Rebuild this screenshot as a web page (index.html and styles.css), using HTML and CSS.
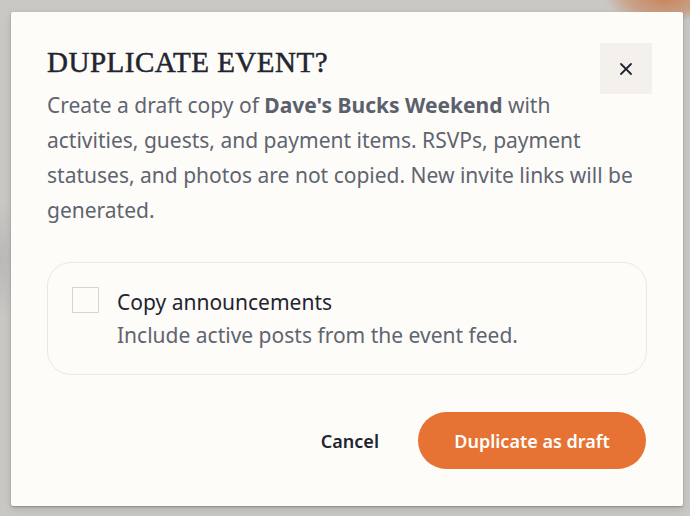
FILE: index.html
```html
<!DOCTYPE html>
<html lang="en">
<head>
    <meta charset="UTF-8">
    <meta name="viewport" content="width=device-width, initial-scale=1.0">
    <title>Duplicate Event</title>
    <link rel="stylesheet" href="styles.css">
</head>
<body>
    <div class="backdrop">
        <div class="modal" role="dialog" aria-labelledby="modalTitle">
            <button class="close-btn" aria-label="Close">
                <svg width="14" height="14" viewBox="0 0 14 14" fill="none" stroke="#1f2430" stroke-width="1.8" stroke-linecap="round">
                    <path d="M2 2 L12 12 M12 2 L2 12"/>
                </svg>
            </button>

            <h2 class="modal-title" id="modalTitle">Duplicate event?</h2>
            <p class="modal-text">
                Create a draft copy of <strong>Dave's Bucks Weekend</strong> with activities, guests, and payment items. RSVPs, payment statuses, and photos are not copied. New invite links will be generated.
            </p>

            <label class="option-card">
                <span class="checkbox"></span>
                <span class="option-body">
                    <span class="option-title">Copy announcements</span>
                    <span class="option-desc">Include active posts from the event feed.</span>
                </span>
            </label>

            <div class="modal-actions">
                <button class="cancel-btn">Cancel</button>
                <button class="primary-btn">Duplicate as draft</button>
            </div>
        </div>
    </div>
</body>
</html>
```

FILE: styles.css
```css
* {
    box-sizing: border-box;
}

body {
    margin: 0;
    font-family: "Noto Sans", "Open Sans", sans-serif;
}

.backdrop {
    width: 690px;
    height: 516px;
    overflow: hidden;
    padding: 12px 0 0 11px;
    background:
        radial-gradient(ellipse 60px 22px at 665px 0, #c8875e 0%, rgba(200, 135, 94, 0.6) 60%, rgba(200, 135, 94, 0) 100%),
        radial-gradient(ellipse 20px 60px at 0 260px, #b9b8b6, rgba(185, 184, 182, 0)),
        #c9c8c5;
}

.modal {
    position: relative;
    width: 672px;
    height: 494px;
    background-color: #fdfcf9;
    border-radius: 2px;
    box-shadow: 0 1px 2px rgba(0, 0, 0, 0.25), 0 3px 8px rgba(0, 0, 0, 0.12);
    padding: 32px 36px 37px;
    display: flex;
    flex-direction: column;
}

.close-btn {
    position: absolute;
    top: 31px;
    right: 31px;
    width: 52px;
    height: 51px;
    border: none;
    background-color: #f4f1ec;
    display: flex;
    align-items: center;
    justify-content: center;
    cursor: pointer;
    padding: 0;
}

.modal-title {
    margin: 0;
    font-family: "Liberation Serif", "DejaVu Serif", serif;
    font-size: 29px;
    font-weight: normal;
    text-transform: uppercase;
    letter-spacing: 0.5px;
    color: #22252e;
    line-height: 36px;
    -webkit-text-stroke: 0.5px #22252e;
}

.modal-text {
    margin: 8px 0 0;
    font-size: 21px;
    line-height: 35px;
    color: #5f6470;
    padding-right: 10px;
}

.modal-text strong {
    font-weight: 700;
    color: #5a606c;
}

.option-card {
    margin-top: 34px;
    border: 1px solid #ebe8e3;
    border-radius: 24px;
    padding: 24px 24px 21px;
    display: flex;
    gap: 18px;
    cursor: pointer;
}

.checkbox {
    width: 27px;
    height: 26px;
    border: 1px solid #d8d5d0;
    background-color: #fdfcf9;
    flex-shrink: 0;
}

.option-body {
    display: flex;
    flex-direction: column;
}

.option-title {
    font-size: 21px;
    line-height: 30px;
    color: #1f2430;
}

.option-desc {
    font-size: 21px;
    line-height: 36px;
    color: #5f6470;
}

.modal-actions {
    margin-top: auto;
    display: flex;
    justify-content: flex-end;
    align-items: center;
    gap: 19px;
}

.cancel-btn {
    border: none;
    background: none;
    font-family: inherit;
    font-size: 18px;
    font-weight: 600;
    color: #1f2430;
    padding: 0 20px;
    height: 57px;
    cursor: pointer;
}

.primary-btn {
    border: none;
    background-color: #e67333;
    color: #ffffff;
    font-family: inherit;
    font-size: 18px;
    font-weight: 600;
    width: 228px;
    height: 57px;
    border-radius: 29px;
    margin-right: 1px;
    cursor: pointer;
}
```
